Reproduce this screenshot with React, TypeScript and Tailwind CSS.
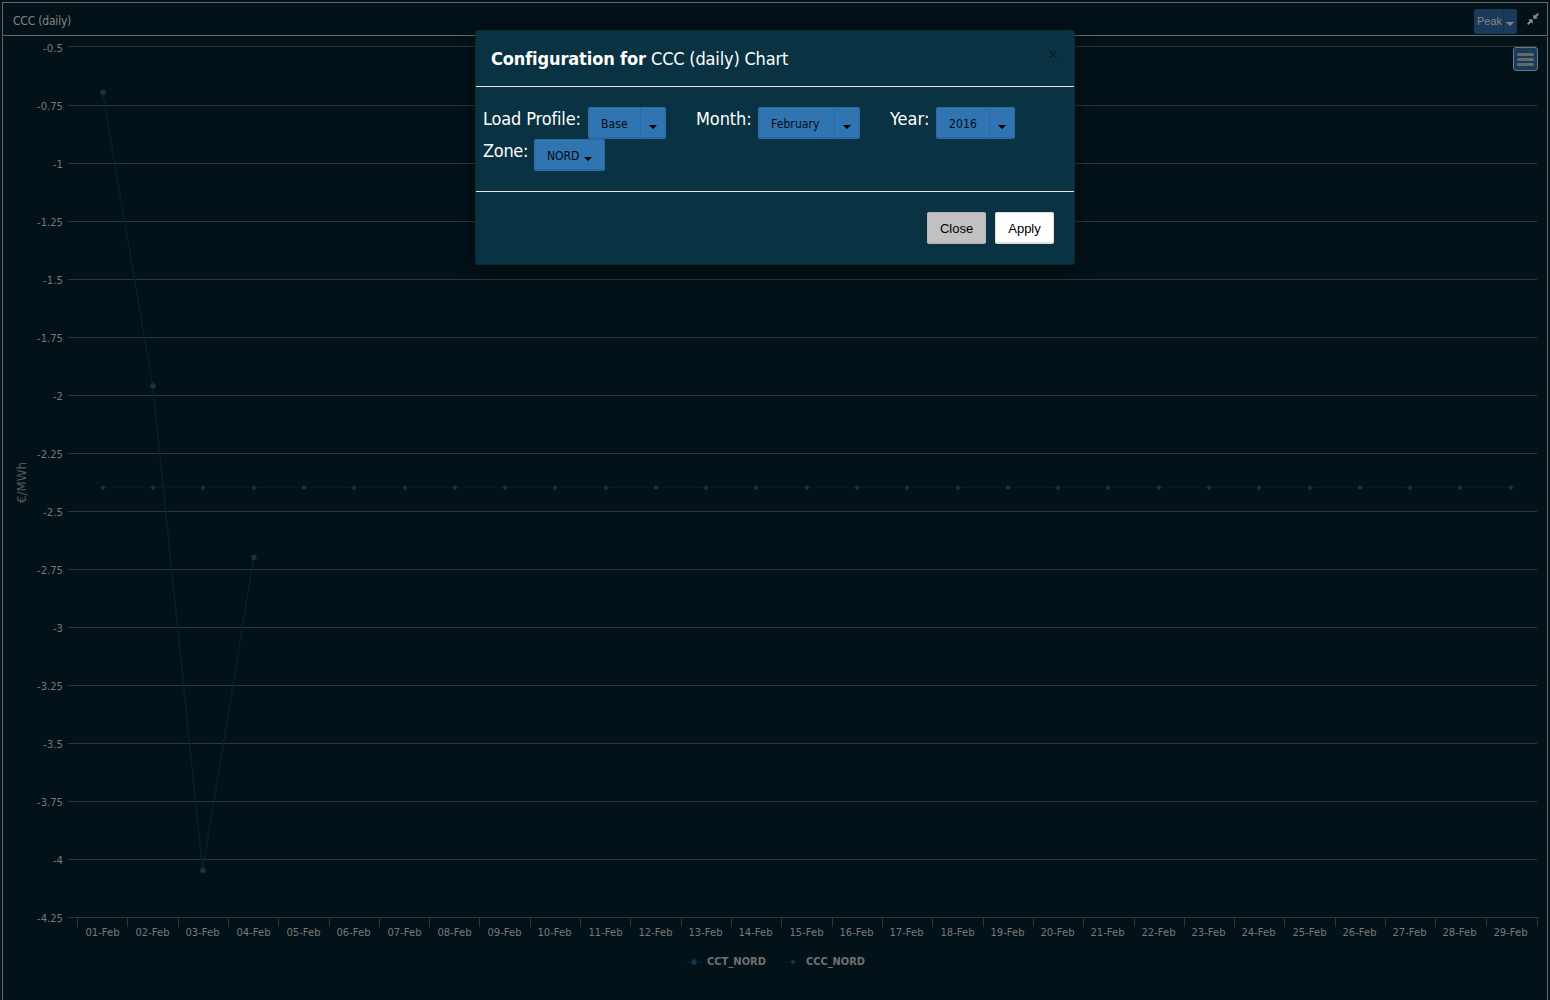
import React from "react";

const GRID = "#333437";
const LABEL = "#787878";
const yLabels = ["-0.5", "-0.75", "-1", "-1.25", "-1.5", "-1.75", "-2", "-2.25", "-2.5", "-2.75", "-3", "-3.25", "-3.5", "-3.75", "-4", "-4.25"];
const days = Array.from({ length: 29 }, (_, i) => String(i + 1).padStart(2, "0") + "-Feb");
const labelWidths = [20, 26, 10, 26, 20, 26, 10, 26, 20, 26, 10, 26, 20, 26, 10, 26];
const gridY = (i: number) => (i === 0 ? 46.5 : 47.5 + 58 * i);
const dayX = (i: number) => Math.round(102.85 + i * 50.28);
const tickX = (i: number) => (i === 29 ? 1537 : Math.floor(77.5 + i * 50.31)) + 0.5;

function Caret({ className }: { className: string }) {
  return (
    <svg className={className} width="8" height="4" viewBox="0 0 8 4" fill="currentColor">
      <path d="M0 0h8L4 4z" />
    </svg>
  );
}

function Chart() {
  const pts: [number, number][] = [[102.7, 92.5], [152.7, 386], [202.7, 870.5], [253.7, 557.5]];
  return (
    <svg className="block" width="1544" height="963" viewBox="3 37 1544 963" fontFamily="'DejaVu Sans Condensed','DejaVu Sans',sans-serif" fontStretch="condensed">
      {yLabels.map((l, i) => (
        <g key={l}>
          <line x1="68" x2="1537" y1={gridY(i)} y2={gridY(i)} stroke={GRID} />
          <text x={63 - labelWidths[i]} y={gridY(i) + (i === 0 ? 5.5 : 4.5)} fontSize="11.3" fill={LABEL} textLength={labelWidths[i]} lengthAdjust="spacingAndGlyphs">{l}</text>
        </g>
      ))}
      {Array.from({ length: 30 }, (_, i) => (
        <line key={i} x1={tickX(i)} x2={tickX(i)} y1="917" y2="927" stroke={GRID} />
      ))}
      {days.map((d, i) => (
        <text key={d} x={dayX(i) - 17.5} y="936" fontSize="11.3" fill={LABEL} textLength="34" lengthAdjust="spacingAndGlyphs">{d}</text>
      ))}
      <text transform="translate(26 503) rotate(-90)" fontSize="12" fill="#585858" textLength="41" lengthAdjust="spacingAndGlyphs">€/MWh</text>
      <line x1="103" x2="1511" y1="487.5" y2="487.5" stroke="#08202d" strokeDasharray="1 1" />
      {days.map((d, i) => (
        <path key={d} d={`M${dayX(i)} 485.1l2.6 2.6l-2.6 2.6l-2.6 -2.6z`} fill="#16354b" />
      ))}
      <polyline points={pts.map((p) => p.join(",")).join(" ")} fill="none" stroke="#08202d" strokeWidth="1.4" />
      {pts.map(([x, y]) => (
        <circle key={x} cx={x + 0.3} cy={y} r="2.7" fill="#16354b" />
      ))}
      <line x1="686" x2="702" y1="962" y2="962" stroke="#08202d" strokeWidth="1.4" />
      <circle cx="694" cy="962" r="2.7" fill="#16354b" />
      <text x="707" y="965" fontSize="11" fontWeight="bold" fill="#707070" textLength="59" lengthAdjust="spacingAndGlyphs">CCT_NORD</text>
      <line x1="785" x2="801" y1="962" y2="962" stroke="#08202d" strokeDasharray="1 1" />
      <path d="M793 959.4l2.6 2.6l-2.6 2.6l-2.6 -2.6z" fill="#16354b" />
      <text x="806" y="965" fontSize="11" fontWeight="bold" fill="#707070" textLength="59" lengthAdjust="spacingAndGlyphs">CCC_NORD</text>
    </svg>
  );
}

function SplitButton({ label, className, arrow }: { label: string; className: string; arrow: string }) {
  return (
    <div className={"flex h-8 rounded-[2px] border border-[#2b6aa2] border-b-2 bg-[#3075b1] text-[12px] leading-[32px] tracking-[0.1px] text-[#020a12] " + className}>
      <span className="flex-1 pl-[12px] whitespace-nowrap">{label}</span>
      <span className={"flex items-center justify-center border-l border-[#2b6aa2] " + arrow}>
        <Caret className="mt-[8px] text-black" />
      </span>
    </div>
  );
}

function Modal() {
  return (
    <div className="absolute left-[475px] top-[30px] w-[600px] h-[235px] rounded-[3px] border border-[#082b38] bg-[#093342] text-white text-[18px] shadow-[0_5px_15px_rgba(0,0,0,0.5)]">
      <div className="flex h-[56px] justify-between border-b border-[#e5e5e5] pl-[15px] pr-[16px]">
        <h4 className="flex leading-[55px] whitespace-nowrap">
          <b className="w-[160px] tracking-[-0.12px]">Configuration for</b>
          <span className="tracking-[-0.18px]">CCC (daily) Chart</span>
        </h4>
        <svg className="mt-[20px]" width="10" height="10" viewBox="0 0 10 10" fill="none" stroke="#1c4452" strokeWidth="2">
          <path d="M1 1l8 8M9 1l-8 8" /><path d="M1 0l8 8M9 0l-8 8" stroke="#062531" />
        </svg>
      </div>
      <div className="h-[105px] border-b border-[#e5e5e5] pl-[7px] pt-[20px]">
        <div className="flex leading-[24px] whitespace-nowrap">
          <span className="w-[105px] tracking-[-0.14px]">Load Profile:</span>
          <SplitButton label="Base" className="w-[78px]" arrow="w-[25px]" />
          <span className="ml-[30px] w-[62px] tracking-[-0.1px]">Month:</span>
          <SplitButton label="February" className="w-[102px]" arrow="w-[25px]" />
          <span className="ml-[30px] w-[46px] tracking-[0.05px]">Year:</span>
          <SplitButton label="2016" className="w-[79px]" arrow="w-[25px]" />
        </div>
        <div className="flex leading-[24px] whitespace-nowrap">
          <span className="w-[51px] tracking-[-0.3px]">Zone:</span>
          <div className="flex h-8 w-[71px] rounded-[2px] border border-b-2 border-[#2b6aa2] bg-[#3075b1] pl-[12px] text-[12px] leading-[32px] text-[#020a12]">
            <span className="w-[37px]">NORD</span>
            <Caret className="mt-[17px] text-black" />
          </div>
        </div>
      </div>
      <div className="flex justify-end gap-[9px] pr-[20px] pt-[20px] font-['Liberation_Sans',sans-serif] text-[13px] leading-[31px] text-black">
        <button className="h-8 w-[59px] rounded-[2px] border border-b-2 border-[#b7b7b7] bg-[#c1c1c1]">Close</button>
        <button className="h-8 w-[59px] rounded-[2px] border border-b-2 border-[#dfdfdf] bg-white">Apply</button>
      </div>
    </div>
  );
}

export default function App() {
  return (
    <div className="relative h-[1000px] w-[1550px] overflow-hidden bg-[#021218] px-[2px] pt-[2px] [font-stretch:condensed] font-['DejaVu_Sans_Condensed','DejaVu_Sans',sans-serif]">
      <div className="flex h-[34px] w-[1546px] items-start border border-[#686868] text-[#858585]">
        <span className="flex-1 pl-[10px] pt-[9px] text-[12px] leading-[18px] tracking-[-0.2px]">CCC (daily)</span>
        <div className="mt-[6px] flex h-[25px] w-[43px] rounded-[2px] border border-[#163a58] bg-[#183b5a] font-['Liberation_Sans',sans-serif] text-[11px] leading-[23px]">
          <span className="w-[29px] border-r border-[#14334f] pl-[2px]">Peak</span>
          <Caret className="ml-[2px] mt-[12px]" />
        </div>
        <svg className="ml-[10px] mr-[8px] mt-[10px]" width="12" height="12" viewBox="0 0 12 12" fill="#8c8c8c">
          <path d="M6.300 1.300v4.400H10.700L9.300 4.300 12 1.300 10.700 0 7.700 2.700zM5.700 10.700V6.300H1.300L2.700 7.700 0 10.700 1.300 12 4.300 9.300z" />
        </svg>
      </div>
      <div className="mt-[1px] h-[963px] w-[1546px] border-x border-[#686868]">
        <Chart />
      </div>
      <div className="absolute left-[1513px] top-[47px] flex h-[24px] w-[25px] flex-col items-center justify-center gap-[2px] rounded-[3px] border border-[#6c7880] bg-[#183b5a]">
        <i className="h-[3px] w-[17px] rounded-full bg-[#686868]" />
        <i className="h-[3px] w-[17px] rounded-full bg-[#686868]" />
        <i className="h-[3px] w-[17px] rounded-full bg-[#686868]" />
      </div>
      <Modal />
    </div>
  );
}
